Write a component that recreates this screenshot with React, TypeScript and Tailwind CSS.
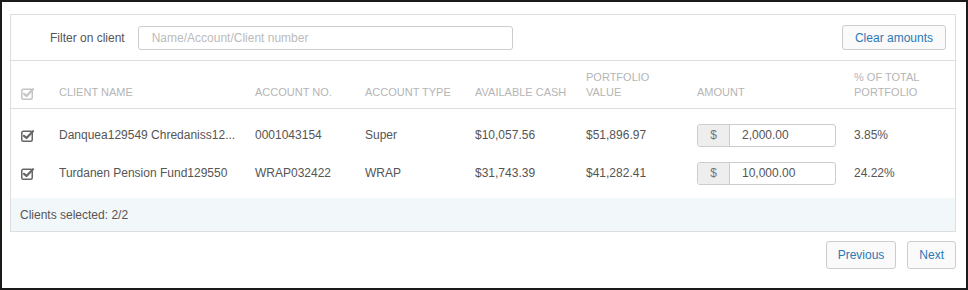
import React from 'react';

const cols = ['w-[38px]', 'w-[196px]', 'w-[110px]', 'w-[110px]', 'w-[111px]', 'w-[111px]', 'w-[157px]', 'w-[111px]'];

function CheckIcon({ light }: { light?: boolean }) {
  const c = light ? '#c4c4c4' : '#666';
  return (
    <svg width="14" height="13" viewBox="0 0 14 13" fill="none">
      <rect x="0.75" y="2.25" width="10.5" height="10" rx="1.5" stroke={c} strokeWidth="1.5" />
      <path d="M3 6.8 L5.5 9 L12 2.2" stroke={c} strokeWidth="2.2" strokeLinecap="round" strokeLinejoin="round" />
    </svg>
  );
}

const rows = [
  { name: 'Danquea129549 Chredaniss12...', acct: '0001043154', type: 'Super', cash: '$10,057.56', value: '$51,896.97', amount: '2,000.00', pct: '3.85%' },
  { name: 'Turdanen Pension Fund129550', acct: 'WRAP032422', type: 'WRAP', cash: '$31,743.39', value: '$41,282.41', amount: '10,000.00', pct: '24.22%' },
];

function App() {
  return (
    <div className="w-[968px] h-[290px] border-2 border-[#1a1a1a] bg-white text-[12px] text-[#555] font-['Liberation_Sans',Arial,sans-serif]">
      <div className="ml-[8px] mr-[10px] mt-[12px] border border-[#dedede]">
        <div className="flex items-center h-[46px] border-b border-[#dedede] pl-[39px] pr-[9px]">
          <span className="text-[12px] text-[#555] mr-[13px]">Filter on client</span>
          <div className="w-[375px] h-[24px] border border-[#ccc] rounded-[3px] flex items-center pl-[13px] text-[#bbb]">
            Name/Account/Client number
          </div>
          <div className="flex-1" />
          <button className="h-[25px] px-[12px] border border-[#ccc] rounded-[3px] bg-[#fafafa] text-[#2a78b6]">Clear amounts</button>
        </div>
        <div className="flex h-[48px] border-b border-[#dedede] text-[11px] text-[#b5b5b5] uppercase leading-[15px]">
          <div className={`${cols[0]} pl-[10px] flex items-end pb-[8px]`}><CheckIcon light /></div>
          <div className={`${cols[1]} pl-[10px] flex items-end pb-[8px]`}>Client name</div>
          <div className={`${cols[2]} pl-[10px] flex items-end pb-[8px]`}>Account no.</div>
          <div className={`${cols[3]} pl-[10px] flex items-end pb-[8px]`}>Account type</div>
          <div className={`${cols[4]} pl-[10px] flex items-end pb-[8px]`}>Available cash</div>
          <div className={`${cols[5]} pl-[10px] flex items-end pb-[8px]`}>Portfolio<br />value</div>
          <div className={`${cols[6]} pl-[10px] flex items-end pb-[8px]`}>Amount</div>
          <div className={`${cols[7]} pl-[10px] flex items-end pb-[8px]`}>% of total<br />portfolio</div>
        </div>
        <div className="pt-[7px] pb-[6px]">
          {rows.map((r) => (
            <div key={r.acct} className="flex items-center h-[38px]">
              <div className={`${cols[0]} pl-[10px] flex items-center`}><CheckIcon /></div>
              <div className={`${cols[1]} pl-[10px]`}>{r.name}</div>
              <div className={`${cols[2]} pl-[10px]`}>{r.acct}</div>
              <div className={`${cols[3]} pl-[10px]`}>{r.type}</div>
              <div className={`${cols[4]} pl-[10px]`}>{r.cash}</div>
              <div className={`${cols[5]} pl-[10px]`}>{r.value}</div>
              <div className={`${cols[6]} pl-[10px]`}>
                <div className="flex w-[139px] h-[23px] border border-[#ccc] rounded-[3px] overflow-hidden">
                  <div className="w-[32px] bg-[#eee] border-r border-[#ccc] flex items-center justify-center text-[#777]">$</div>
                  <div className="flex-1 flex items-center pl-[12px]">{r.amount}</div>
                </div>
              </div>
              <div className={`${cols[7]} pl-[10px]`}>{r.pct}</div>
            </div>
          ))}
        </div>
        <div className="h-[33px] bg-[#f2f7fa] flex items-center pl-[9px]">Clients selected: 2/2</div>
      </div>
      <div className="flex justify-end gap-[11px] mr-[10px] mt-[9px]">
        <button className="h-[28px] px-[11px] border border-[#ccc] rounded-[3px] bg-[#fafafa] text-[#2a78b6]">Previous</button>
        <button className="h-[28px] px-[11px] border border-[#ccc] rounded-[3px] bg-[#fafafa] text-[#2a78b6]">Next</button>
      </div>
    </div>
  );
}

export default App;
